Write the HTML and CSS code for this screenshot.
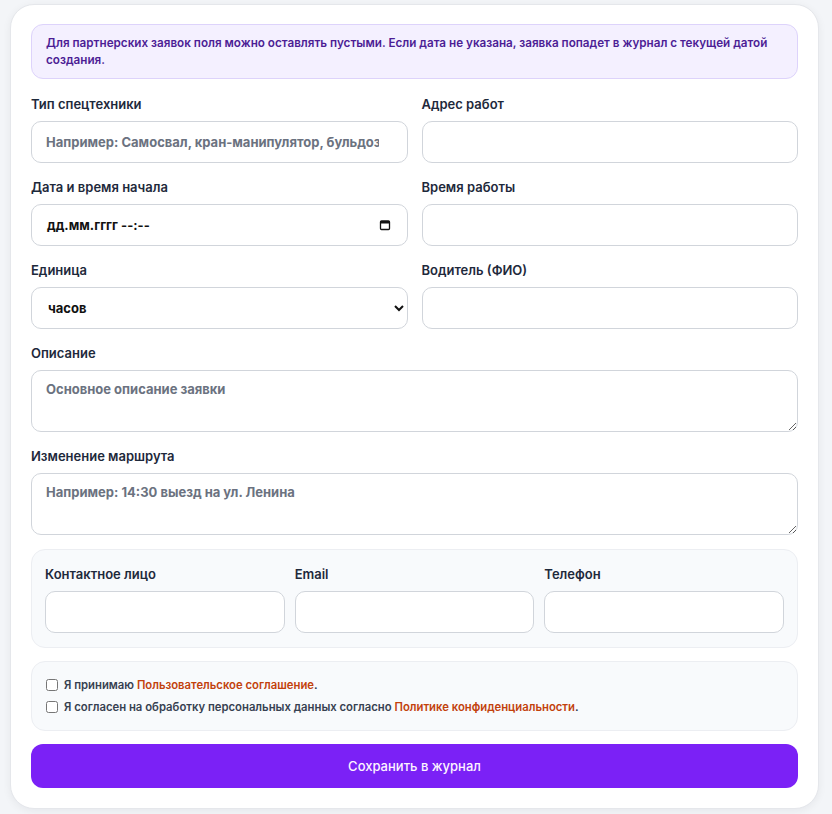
FILE: index.html
```html
<!DOCTYPE html>
<html lang="ru">
<head>
    <meta charset="UTF-8">
    <meta name="viewport" content="width=device-width, initial-scale=1.0">
    <title>Новая заявка</title>
    <link rel="stylesheet" href="styles.css">
</head>
<body>
    <form class="card">
        <div class="notice">
            Для партнерских заявок поля можно оставлять пустыми. Если дата не указана, заявка попадет в журнал с текущей датой создания.
        </div>

        <div class="grid">
            <div class="field">
                <label>Тип спецтехники</label>
                <input type="text" placeholder="Например: Самосвал, кран-манипулятор, бульдозер">
            </div>
            <div class="field">
                <label>Адрес работ</label>
                <input type="text">
            </div>

            <div class="field">
                <label>Дата и время начала</label>
                <div class="date-input">
                    <span>дд.мм.гггг --:--</span>
                    <svg width="12" height="12" viewBox="0 0 12 12" fill="none">
                        <rect x="1.5" y="2" width="9" height="8.5" rx="1" stroke="#111" stroke-width="1.3"/>
                        <rect x="1.5" y="2" width="9" height="2.5" fill="#111"/>
                    </svg>
                </div>
            </div>
            <div class="field">
                <label>Время работы</label>
                <input type="text">
            </div>

            <div class="field">
                <label>Единица</label>
                <select>
                    <option>часов</option>
                    <option>смен</option>
                    <option>рейсов</option>
                </select>
            </div>
            <div class="field">
                <label>Водитель (ФИО)</label>
                <input type="text">
            </div>

            <div class="field wide">
                <label>Описание</label>
                <textarea placeholder="Основное описание заявки"></textarea>
            </div>

            <div class="field wide">
                <label>Изменение маршрута</label>
                <textarea placeholder="Например: 14:30 выезд на ул. Ленина"></textarea>
            </div>
        </div>

        <div class="box contacts">
            <div class="field">
                <label>Контактное лицо</label>
                <input type="text">
            </div>
            <div class="field">
                <label>Email</label>
                <input type="email">
            </div>
            <div class="field">
                <label>Телефон</label>
                <input type="tel">
            </div>
        </div>

        <div class="box consents">
            <label class="check">
                <input type="checkbox">
                <span>Я принимаю <a href="#">Пользовательское соглашение</a>.</span>
            </label>
            <label class="check">
                <input type="checkbox">
                <span>Я согласен на обработку персональных данных согласно <a href="#">Политике конфиденциальности</a>.</span>
            </label>
        </div>

        <button type="submit" class="save">Сохранить в журнал</button>
    </form>
</body>
</html>
```

FILE: styles.css
```css
body {
    margin: 0;
    padding: 4px 13px 6px 10px;
    background: #f3f5f8;
    font-family: Inter, "Noto Sans", sans-serif;
    color: #1f2937;
}
.card {
    display: flex;
    flex-direction: column;
    gap: 13px;
    background: #fff;
    border: 1px solid #e5e7eb;
    border-radius: 24px;
    padding: 19px 20px 20px;
    box-shadow: 0 2px 8px rgba(15, 23, 42, 0.06);
}
.notice {
    background: #f4f0ff;
    border: 1px solid #ddd3fb;
    border-radius: 12px;
    padding: 10px 14px 9px;
    font-size: 11.7px;
    font-weight: 600;
    line-height: 17px;
    color: #4c1d95;
}
.grid {
    display: grid;
    grid-template-columns: 1fr 1fr;
    column-gap: 14px;
    row-gap: 14px;
    margin-top: 2px;
}
.field {
    display: flex;
    flex-direction: column;
    gap: 7px;
    min-width: 0;
}
.wide {
    grid-column: 1 / -1;
}
.field label {
    font-size: 13px;
    font-weight: 600;
    line-height: 20px;
    color: #1e293b;
}
input[type="text"], input[type="email"], input[type="tel"], select, textarea, .date-input {
    box-sizing: border-box;
    height: 42px;
    width: 100%;
    border: 1px solid #d1d5db;
    border-radius: 10px;
    background: #fff;
    padding: 0 28px 0 14px;
    font-family: inherit;
    font-size: 13px;
    font-weight: 700;
    color: #111827;
}
input::placeholder, textarea::placeholder {
    color: #6b7280;
}
.date-input {
    display: flex;
    align-items: center;
    justify-content: space-between;
    padding: 0 16px 0 15px;
    color: #111;
}
select {
    padding: 0 6px 0 12px;
    color: #111;
}
textarea {
    height: 62px;
    padding: 10px 14px;
    resize: vertical;
}
.box {
    background: #f8fafc;
    border: 1px solid #eceef2;
    border-radius: 14px;
}
.contacts {
    display: grid;
    grid-template-columns: 1fr 1fr 1fr;
    gap: 10px;
    padding: 14px 13px 14px 13px;
    margin-top: 1px;
}
.consents {
    display: flex;
    flex-direction: column;
    gap: 6px;
    padding: 15px 14px 15px;
}
.check {
    display: flex;
    align-items: center;
    gap: 6px;
    font-size: 11.3px;
    font-weight: 600;
    line-height: 16px;
    color: #374151;
}
.check input {
    margin: 0;
    width: 12px;
    height: 12px;
}
.check a {
    color: #c2410c;
    text-decoration: none;
}
.save {
    height: 44px;
    border: none;
    border-radius: 12px;
    background: #7b21f6;
    color: #fdf4ff;
    font-family: inherit;
    font-size: 13px;
    font-weight: 500;
    cursor: pointer;
}
```
